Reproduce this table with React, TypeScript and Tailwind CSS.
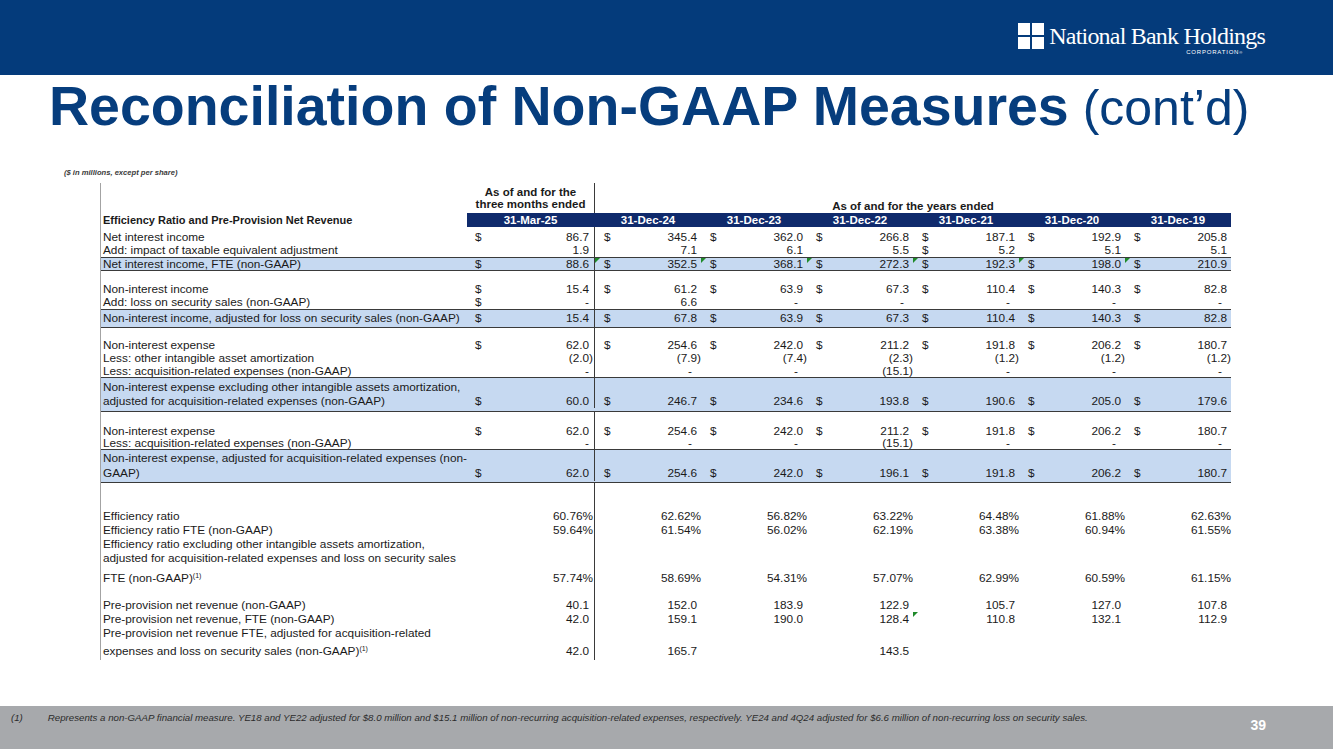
import React from 'react';

type Cell = [string, string];

interface RowSpec {
  label: React.ReactNode;
  cells?: Cell[];
  cls: string;
  hl?: boolean;
  tri?: number[];
}

const years = ['31-Dec-24', '31-Dec-23', '31-Dec-22', '31-Dec-21', '31-Dec-20', '31-Dec-19'];

const dollar = (vals: string[]): Cell[] => vals.map((v) => ['$', v] as Cell);
const plain = (vals: string[]): Cell[] => vals.map((v) => ['', v] as Cell);

const Sup = () => <span className="relative -top-[4px] text-[7px] leading-none">(1)</span>;

const rows: RowSpec[] = [
  { label: null, cls: 'h-[3px]' },
  { label: 'Net interest income', cells: dollar(['86.7', '345.4', '362.0', '266.8', '187.1', '192.9', '205.8']), cls: 'h-[14px] leading-[14px]' },
  {
    label: 'Add: impact of taxable equivalent adjustment',
    cells: [['', '1.9'], ['', '7.1'], ['', '6.1'], ['', '5.5'], ['$', '5.2'], ['', '5.1'], ['', '5.1']],
    cls: 'h-[13px] leading-[13px]',
  },
  {
    label: 'Net interest income, FTE (non-GAAP)',
    cells: dollar(['88.6', '352.5', '368.1', '272.3', '192.3', '198.0', '210.9']),
    cls: 'h-[14px] leading-[12px]',
    hl: true,
    tri: [0, 1, 2, 3, 4, 5],
  },
  { label: null, cls: 'h-[11px]' },
  { label: 'Non-interest income', cells: dollar(['15.4', '61.2', '63.9', '67.3', '110.4', '140.3', '82.8']), cls: 'h-[14px] leading-[14px]' },
  {
    label: 'Add: loss on security sales (non-GAAP)',
    cells: [['$', '-'], ['', '6.6'], ['', '-'], ['', '-'], ['', '-'], ['', '-'], ['', '-']],
    cls: 'h-[13px] leading-[13px]',
  },
  {
    label: 'Non-interest income, adjusted for loss on security sales (non-GAAP)',
    cells: dollar(['15.4', '67.8', '63.9', '67.3', '110.4', '140.3', '82.8']),
    cls: 'h-[19px] leading-[17px]',
    hl: true,
  },
  { label: null, cls: 'h-[10px]' },
  { label: 'Non-interest expense', cells: dollar(['62.0', '254.6', '242.0', '211.2', '191.8', '206.2', '180.7']), cls: 'h-[14px] leading-[14px]' },
  {
    label: 'Less: other intangible asset amortization',
    cells: plain(['(2.0)', '(7.9)', '(7.4)', '(2.3)', '(1.2)', '(1.2)', '(1.2)']),
    cls: 'h-[13px] leading-[13px]',
  },
  {
    label: 'Less: acquisition-related expenses (non-GAAP)',
    cells: plain(['-', '-', '-', '(15.1)', '-', '-', '-']),
    cls: 'h-[12px] leading-[12px]',
  },
  {
    label: (
      <>
        Non-interest expense excluding other intangible assets amortization,
        <br />
        adjusted for acquisition-related expenses (non-GAAP)
      </>
    ),
    cells: dollar(['60.0', '246.7', '234.6', '193.8', '190.6', '205.0', '179.6']),
    cls: 'h-[35px] leading-[14px] pb-[3px]',
    hl: true,
  },
  { label: null, cls: 'h-[13px]' },
  { label: 'Non-interest expense', cells: dollar(['62.0', '254.6', '242.0', '211.2', '191.8', '206.2', '180.7']), cls: 'h-[13px] leading-[13px]' },
  {
    label: 'Less: acquisition-related expenses (non-GAAP)',
    cells: plain(['-', '-', '-', '(15.1)', '-', '-', '-']),
    cls: 'h-[11px] leading-[11px]',
  },
  {
    label: (
      <>
        Non-interest expense, adjusted for acquisition-related expenses (non-
        <br />
        GAAP)
      </>
    ),
    cells: dollar(['62.0', '254.6', '242.0', '196.1', '191.8', '206.2', '180.7']),
    cls: 'h-[34px] leading-[15px] pb-[1px]',
    hl: true,
  },
  { label: null, cls: 'h-[26px]' },
  { label: 'Efficiency ratio', cells: plain(['60.76%', '62.62%', '56.82%', '63.22%', '64.48%', '61.88%', '62.63%']), cls: 'h-[14px] leading-[14px]' },
  { label: 'Efficiency ratio FTE (non-GAAP)', cells: plain(['59.64%', '61.54%', '56.02%', '62.19%', '63.38%', '60.94%', '61.55%']), cls: 'h-[14px] leading-[14px]' },
  { label: 'Efficiency ratio excluding other intangible assets amortization,', cls: 'h-[14px] leading-[14px]' },
  { label: 'adjusted for acquisition-related expenses and loss on security sales', cls: 'h-[14px] leading-[14px]' },
  {
    label: (
      <>
        FTE (non-GAAP)
        <Sup />
      </>
    ),
    cells: plain(['57.74%', '58.69%', '54.31%', '57.07%', '62.99%', '60.59%', '61.15%']),
    cls: 'h-[20px] leading-[14px]',
  },
  { label: null, cls: 'h-[13px]' },
  { label: 'Pre-provision net revenue (non-GAAP)', cells: plain(['40.1', '152.0', '183.9', '122.9', '105.7', '127.0', '107.8']), cls: 'h-[14px] leading-[14px]' },
  {
    label: 'Pre-provision net revenue, FTE (non-GAAP)',
    cells: plain(['42.0', '159.1', '190.0', '128.4', '110.8', '132.1', '112.9']),
    cls: 'h-[14px] leading-[14px]',
    tri: [3],
  },
  { label: 'Pre-provision net revenue FTE, adjusted for acquisition-related', cls: 'h-[14px] leading-[14px]' },
  {
    label: (
      <>
        expenses and loss on security sales (non-GAAP)
        <Sup />
      </>
    ),
    cells: plain(['42.0', '165.7', '', '143.5', '', '', '']),
    cls: 'h-[18px] leading-[14px]',
  },
  { label: null, cls: 'h-[2px]' },
];

// accounting format: numbers leave room for the closing paren
const firstPad = (v: string) => {
  if (v.endsWith(')') || v.endsWith('%')) return 'pr-[1px]';
  return 'pr-[5px]';
};

const yearPad = (v: string) => {
  if (v.endsWith(')') || v.endsWith('%')) return 'pr-[0px]';
  if (v === '-') return 'pr-[9px]';
  return 'pr-[4px]';
};

const Tri = () => (
  <span className="absolute left-0 top-0 w-0 h-0 border-t-[5px] border-r-[5px] border-t-[#1f8a2a] border-r-transparent" />
);

function TableRow({ r }: { r: RowSpec }) {
  const cells = r.cells ?? [];
  return (
    <div className={`flex items-end ${r.cls} ${r.hl ? 'bg-[#c6d9f1] border-y border-[#3a3a3a]' : ''}`}>
      <div className="w-[366px] pl-[2px] whitespace-nowrap">{r.label}</div>
      <div className="w-[128px] self-stretch flex items-end border-r border-[#3a3a3a]">
        {cells[0] && (
          <>
            <span className="pl-[8px]">{cells[0][0]}</span>
            <span className={`ml-auto ${firstPad(cells[0][1])}`}>{cells[0][1]}</span>
          </>
        )}
      </div>
      {years.map((y, i) => {
        const c = cells[i + 1];
        return (
          <div key={y} className="relative w-[106px] self-stretch flex items-end">
            {r.tri?.includes(i) && <Tri />}
            {c && (
              <>
                <span className="pl-[9px]">{c[0]}</span>
                <span className={`ml-auto ${yearPad(c[1])}`}>{c[1]}</span>
              </>
            )}
          </div>
        );
      })}
    </div>
  );
}

function Logo() {
  return (
    <div className="flex items-start gap-[5px]">
      <svg width="26" height="26" viewBox="0 0 26 26" className="mt-[23px]">
        <rect x="0" y="0" width="12" height="12" fill="#fff" />
        <rect x="14" y="0" width="12" height="12" fill="#fff" />
        <rect x="0" y="14" width="12" height="12" fill="#fff" />
        <rect x="14" y="14" width="12" height="12" fill="#fff" />
      </svg>
      <div className="flex flex-col items-end mt-[24px]">
        <span className="font-['Liberation_Serif',serif] text-[24px] leading-[24px] tracking-[-0.8px] text-white">
          National Bank Holdings
        </span>
        <span className="text-[6px] leading-[7px] tracking-[0.8px] text-white pr-[22px] mt-[1px]">
          CORPORATION<span className="text-[4px] align-top">®</span>
        </span>
      </div>
    </div>
  );
}

export default function App() {
  return (
    <div className="w-[1333px] h-[749px] bg-white flex flex-col overflow-hidden font-['Liberation_Sans',Arial,sans-serif] text-[#1a1a1a]">
      <div className="h-[75px] shrink-0 bg-[#043b7b] flex justify-end pr-[68px]">
        <Logo />
      </div>

      <h1 className="mt-[4px] h-[54px] pl-[49px] leading-none text-[#063d7d] whitespace-nowrap">
        <span className="text-[55.5px] font-bold">Reconciliation of Non-GAAP Measures</span>
        <span className="text-[50px]"> (cont’d)</span>
      </h1>

      <p className="mt-[35px] pl-[64px] text-[7.6px] leading-[10px] italic font-bold text-[#3a3a3a]">
        ($ in millions, except per share)
      </p>

      <div className="mt-[5px] ml-[100px] w-[1131px] border-l border-[#a3a3a3] text-[11.8px]">
        <div className="flex h-[30px] font-bold text-[11.5px]">
          <div className="w-[366px]" />
          <div className="w-[128px] border-r border-[#3a3a3a] flex flex-col justify-end items-center pb-[3px] leading-[12px]">
            <span>As of and for the</span>
            <span>three months ended</span>
          </div>
          <div className="w-[636px] flex items-end justify-center leading-[14px]">As of and for the years ended</div>
        </div>

        <div className="flex h-[14px] leading-[14px] font-bold text-[11.5px]">
          <div className="w-[366px] pl-[2px] text-[11px]">Efficiency Ratio and Pre-Provision Net Revenue</div>
          <div className="w-[128px] bg-[#0f2a6c] text-white text-center border-r border-[#0f2a6c]">31-Mar-25</div>
          {years.map((y) => (
            <div key={y} className="w-[106px] bg-[#0f2a6c] text-white text-center">
              {y}
            </div>
          ))}
        </div>

        {rows.map((r, i) => (
          <TableRow key={i} r={r} />
        ))}
      </div>

      <div className="flex-1" />

      <footer className="h-[43px] shrink-0 bg-[#a7a9ac] flex items-start text-[#2b2b2b]">
        <span className="ml-[11px] mt-[6px] text-[9.7px] italic leading-[11px]">(1)</span>
        <span className="ml-[25px] mt-[6px] text-[9.7px] italic leading-[11px] whitespace-nowrap">
          Represents a non-GAAP financial measure. YE18 and YE22 adjusted for $8.0 million and $15.1 million of non-recurring acquisition-related expenses, respectively. YE24 and 4Q24 adjusted for $6.6 million of non-recurring loss on security sales.
        </span>
        <span className="ml-auto mr-[67px] mt-[11px] text-[14px] font-bold leading-[16px] text-white">39</span>
      </footer>
    </div>
  );
}
